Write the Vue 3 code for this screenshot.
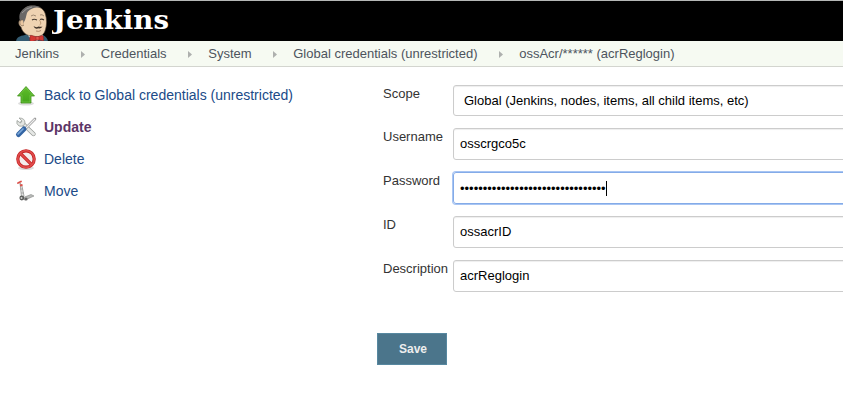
<script setup>
const crumbs = ['Jenkins', 'Credentials', 'System', 'Global credentials (unrestricted)', 'ossAcr/****** (acrReglogin)']
const password = '•'.repeat(32)
const fields = [
  { key: 'scope', label: 'Scope', value: 'Global (Jenkins, nodes, items, all child items, etc)' },
  { key: 'username', label: 'Username', value: 'osscrgco5c' },
  { key: 'password', label: 'Password', value: password },
  { key: 'id', label: 'ID', value: 'ossacrID' },
  { key: 'description', label: 'Description', value: 'acrReglogin' },
]
</script>

<template>
  <div class="page">
    <header class="header">
      <svg class="butler" width="34" height="37" viewBox="0 0 34 37">
        <path d="M0 37C0 33 3 31 9 30L12 28L27 30Q32 33 32 37Z" fill="#335a70" />
        <path d="M11 28L13 32L21 36L27 31L26 27Z" fill="#eee" />
        <path d="M5 15C2 15 2 20 5 22C6 26 9 30 15 31C22 33 27 31 29 26C31 20 31 14 29 8C27 3 22 1 16 1C8 1 5 7 5 15Z" fill="#efd3b2" stroke="#5b4938" stroke-width=".6" />
        <path d="M4 16C2 9 5 5 10 2C14 0 20 0 25 2.5C18 2 13 4 11 8C10 11 10 14 8 17L7 21L5 17Z" fill="#6a6867" />
        <path d="M6 8Q10 3 16 2" fill="none" stroke="#9a9998" stroke-width="1" />
        <path d="M7 15C3 14 3 20 6 21L8 20" fill="#e9c6a0" stroke="#6f5b48" stroke-width=".6" />
        <path d="M15 11Q17 9 20 11M24 10Q26 9 28 11" fill="none" stroke="#8b7660" stroke-width=".8" />
        <path d="M16 15Q18 13.5 21 15M24 14.5Q26 13.5 28 15" fill="none" stroke="#463a30" stroke-width="1.1" />
        <path d="M23.5 15Q26 19 23.5 20" fill="none" stroke="#b08b66" stroke-width=".8" />
        <path d="M17.5 21Q20 23 22.5 21.5Q25 22 26.5 21.5Q25 24 22 23.3Q19 25 17.5 21Z" fill="#41342a" />
        <path d="M20 26Q23 27 25 25.5" fill="none" stroke="#a57a5e" stroke-width=".8" />
        <path d="M14 31.5Q14 29.5 16 30.5L21 32L26 30.5Q28 30 27.5 36L23 35L21 35L15 37Q13 36 14 31.5Z" fill="#d33833" stroke="#7b2020" stroke-width=".5" />
        <path d="M20 31.5H23V35H20Z" fill="#e7534e" stroke="#7b2020" stroke-width=".4" />
      </svg>
      <svg class="wordmark" width="120" height="36" viewBox="0 0 120 36">
        <text x="1" y="24" textLength="116" lengthAdjust="spacingAndGlyphs">Jenkins</text>
      </svg>
    </header>
    <nav class="crumbs">
      <template v-for="(crumb, i) in crumbs" :key="crumb">
        <svg v-if="i" class="arrow" width="4" height="7" viewBox="0 0 4 7"><path d="M0 0L4 3.5L0 7Z" fill="#aeb0ae" /></svg>
        <span>{{ crumb }}</span>
      </template>
    </nav>
    <main class="main">
      <aside class="tasks">
        <a class="task">
          <svg width="24" height="24" viewBox="0 0 24 24">
            <defs><linearGradient id="green" x2="0" y2="1"><stop stop-color="#61bd2b" /><stop offset="1" stop-color="#43a51b" /></linearGradient></defs>
            <ellipse cx="12" cy="20.5" rx="8" ry="2" fill="#ddd" />
            <path d="M12 3.5L20.5 13H17V20H7V13H3.5Z" fill="url(#green)" stroke="#469422" stroke-width=".8" />
            <path d="M12 5L18.5 12H16V19H8V12H5.5Z" fill="none" stroke="#79cb4d" stroke-width=".6" />
          </svg>
          <span>Back to Global credentials (unrestricted)</span>
        </a>
        <a class="task active">
          <svg width="24" height="24" viewBox="0 0 24 24">
            <path d="M8 8L19.5 19" stroke="#969a96" stroke-width="4.4" stroke-linecap="round" />
            <path d="M8 8L19.5 19" stroke="#e5e7e5" stroke-width="3" stroke-linecap="round" />
            <path d="M5 3L8 6L6.5 8L3 5.5Q2 9 5 11Q10 12 11 8Q11 3 5 3Z" fill="#e4e6e3" stroke="#9b9f9b" stroke-width=".8" />
            <path d="M21 4L11 14" stroke="#999" stroke-width="2.6" stroke-linecap="round" /><path d="M21 4L11 14" stroke="#eee" stroke-width="1.2" />
            <path d="M10 14L4.5 19.5" stroke="#3465a4" stroke-width="5" stroke-linecap="round" />
            <path d="M9 14L4 19" stroke="#7ba7d9" stroke-width="1.7" stroke-linecap="round" />
          </svg>
          <span>Update</span>
        </a>
        <a class="task">
          <svg width="24" height="24" viewBox="0 0 24 24">
            <ellipse cx="12" cy="21" rx="8" ry="2" fill="#ddd" />
            <circle cx="12" cy="12" r="8.2" fill="#f4eeee" stroke="#c32222" stroke-width="3.2" />
            <path d="M6 6L18 18" stroke="#c82929" stroke-width="3.2" />
            <circle cx="12" cy="12" r="8.3" fill="none" stroke="#e04c4c" stroke-width="1.7" />
            <path d="M6 6L18 18" stroke="#e04c4c" stroke-width="1.6" />
          </svg>
          <span>Delete</span>
        </a>
        <a class="task">
          <svg width="24" height="24" viewBox="0 0 24 24">
            <path d="M6 4L7.5 18L10 17L8 7Z" fill="#e3e4e3" stroke="#a2a4a2" stroke-width=".9" />
            <path d="M6 10L9 10M7 14L10 14" stroke="#999" stroke-width=".8" />
            <path d="M4 4L7 2.5" stroke="#dc514b" stroke-width="1.8" stroke-linecap="round" />
            <path d="M6 6.5L8.5 6" stroke="#dc514b" stroke-width="1.8" />
            <path d="M8 19L17 15.5L20 17L11 21Z" fill="#b9bbb9" stroke="#858785" stroke-width=".6" />
            <circle cx="7.8" cy="19" r="2.4" fill="#5c5e5c" /><circle cx="7.5" cy="19" r="1" fill="#d3d3d3" />
            <circle cx="12" cy="20" r="1.6" fill="#666" />
          </svg>
          <span>Move</span>
        </a>
      </aside>
      <form class="form" @submit.prevent>
        <div v-for="field in fields" :key="field.key" class="row" :class="field.key">
          <label>{{ field.label }}</label>
          <div class="control"><span>{{ field.value }}</span><i v-if="field.key === 'password'" class="caret"></i></div>
        </div>
        <button class="save" type="button">Save</button>
      </form>
    </main>
  </div>
</template>

<style>
body { margin: 0; background: #fff; }
</style>
<style scoped>
.page { box-sizing: border-box; width: 100%; height: 419px; overflow: hidden; border-top: 1px solid #b5b7b6; background: #fff; color: #333; font-family: "Liberation Sans", Arial, sans-serif; font-size: 13px; }
.header { display: flex; height: 40px; padding-left: 16px; background: #000; overflow: hidden; }
.butler { margin-top: 4px; flex: none; }
.wordmark { margin: 4px 0 0 2px; fill: #fff; font-family: "DejaVu Serif", serif; font-weight: bold; font-size: 26px; }
.crumbs { box-sizing: border-box; display: flex; align-items: center; height: 26px; padding-left: 15px; border-bottom: 1px solid #d3d5cf; background: #f6faf2; color: #4d545d; white-space: nowrap; }
.arrow { margin: 2px 15.8px 0 21.9px; flex: none; }
.main { display: flex; }
.tasks { width: 367px; padding: 16px 0 0 14px; box-sizing: border-box; flex: none; }
.task { display: flex; align-items: center; gap: 6px; height: 32px; margin-top: -4px; margin-bottom: 4px; color: #204a87; font-size: 14px; }
.active { color: #5c3566; font-weight: bold; }
.form { width: 476px; padding: 18px 0 0 10px; box-sizing: border-box; overflow: hidden; }
.row { display: flex; height: 44px; padding-left: 6px; }
.scope { height: 43px; }
label { width: 70px; height: 20px; line-height: 18px; flex: none; }
.control { box-sizing: border-box; display: flex; align-items: center; width: 410px; height: 32px; padding: 0 0 2px 6px; border: 1px solid #ccc; border-radius: 3px; box-shadow: inset 0 1px 1px rgba(0,0,0,.07); color: #000; white-space: nowrap; flex: none; }
.scope .control { height: 31px; padding: 0 0 0 10px; }
.password .control { padding-bottom: 0; border-color: #84abe8; box-shadow: 0 0 0 1px #a8c5f3; }
.caret { width: 1px; height: 15px; background: #000; }
.save { display: block; width: 70px; height: 32px; margin-top: 29px; padding: 0 0 0 2px; border: 1px solid #5788a0; background: #4b758b; color: #eee; font: bold 12px "Liberation Sans", Arial, sans-serif; }
</style>
